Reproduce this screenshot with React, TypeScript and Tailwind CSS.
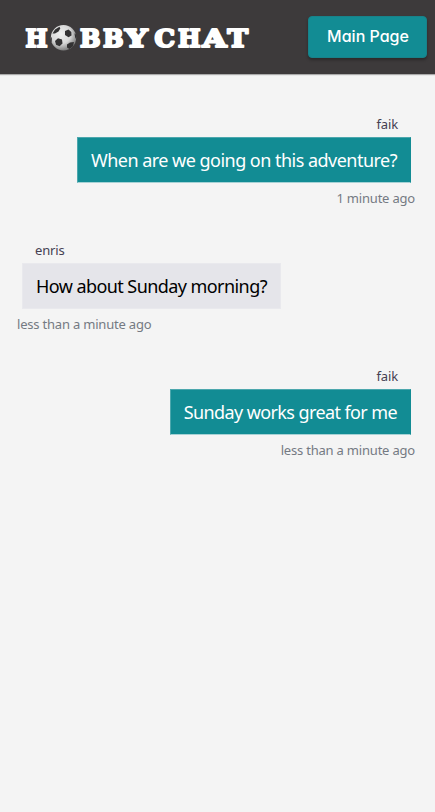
const letters = [
  { c: 'H', x: 25.5, w: 22 },
  { c: 'B', x: 80, w: 20.5 },
  { c: 'B', x: 103, w: 20.5 },
  { c: 'Y', x: 125, w: 22.5 },
  { c: 'C', x: 154.5, w: 20.5 },
  { c: 'H', x: 178, w: 22.5 },
  { c: 'A', x: 202.5, w: 24 },
  { c: 'T', x: 227.5, w: 20.5 },
];

function Logo() {
  return (
    <svg width="260" height="73" viewBox="0 0 260 73" role="img" aria-label="Hobby Chat" className="block shrink-0">
      <defs>
        <radialGradient id="ball" cx="0.4" cy="0.35" r="0.7">
          <stop offset="0" stopColor="#f0f0f0" />
          <stop offset="0.55" stopColor="#d8d8d8" />
          <stop offset="1" stopColor="#707070" />
        </radialGradient>
        <clipPath id="ballClip">
          <circle cx="63.5" cy="36.8" r="12.7" />
        </clipPath>
      </defs>
      <g className="font-['DejaVu_Serif'] font-bold" fontSize="25" fill="#fff" stroke="#fff" strokeWidth="2.2" strokeLinejoin="round">
        {letters.map((l) => (
          <text key={l.x} x={l.x} y="46.4" textLength={l.w} lengthAdjust="spacingAndGlyphs">
            {l.c}
          </text>
        ))}
      </g>
      <circle cx="63.5" cy="36.8" r="12.7" fill="url(#ball)" />
      <g clipPath="url(#ballClip)" fill="#333233">
        <path d="M52.500 32.500 55 28.500 59.500 25.800 60.300 27.500 58.500 30.500 55 32.500Z" />
        <path d="M65 30 68.500 28.500 71.300 31 71.500 34.500 68.500 36.300 65 34Z" />
        <path d="M55 40 58 37.300 62 38.500 62.500 42.500 59.500 45.300 56 43.800Z" />
        <path d="M67 43.500 70 41.500 74 41 73 45.500 69.500 48 67 46.500Z" />
        <path d="M50.500 35 51.800 37 51.800 41 50 41ZM74.500 32.500 77 33 77 39 75.300 37Z" />
      </g>
    </svg>
  );
}

type Message = { author: string; text: string; time: string; own: boolean; size: string; spacing: string };

const messages: Message[] = [
  { author: 'faik', text: 'When are we going on this adventure?', time: '1 minute ago', own: true, size: 'w-[334px]', spacing: 'tracking-[-0.52px]' },
  { author: 'enris', text: 'How about Sunday morning?', time: 'less than a minute ago', own: false, size: 'w-[259px]', spacing: 'tracking-[-0.57px]' },
  { author: 'faik', text: 'Sunday works great for me', time: 'less than a minute ago', own: true, size: 'w-[241px]', spacing: 'tracking-[-0.6px]' },
];

function ChatMessage({ author, text, time, own, size, spacing }: Message) {
  return (
    <div className={`flex h-[126px] flex-col whitespace-nowrap ${own ? 'items-end' : 'items-start'}`}>
      <div className={`h-5 text-[13px] leading-5 tracking-[-0.15px] text-[#454052] ${own ? 'mr-[37px]' : 'ml-[35px]'}`}>{author}</div>
      <div
        className={`mt-[3px] flex h-[46px] items-center border px-[13px] pt-px text-[18px] ${size} ${
          own ? 'mr-6 justify-end border-[#4ca7ad] border-r-[#128c94] border-b-[#a7d2d5] bg-[#128c94] text-white' : 'ml-[22px] border-[#e9e9ed] bg-[#e5e5ea] text-black'
        }`}
      >
        <span className={spacing}>{text}</span>
      </div>
      <div className={`mt-[5px] h-5 text-[13px] leading-5 tracking-[-0.2px] text-[#747a83] ${own ? 'mr-5' : 'ml-[17px]'}`}>{time}</div>
    </div>
  );
}

export default function App() {
  return (
    <div className="min-h-screen bg-[#f4f4f4] font-['Noto_Sans','Open_Sans',sans-serif]">
      <header className="flex h-[74px] items-center justify-between bg-[#3d3a3b] pr-2 shadow-[0_1px_1px_rgba(0,0,0,0.3)]">
        <Logo />
        <button className="h-[42px] w-[119px] rounded-[4px] border border-[#18828a] bg-[#128c94] pb-0.5 pl-px font-['Inter',sans-serif] text-[16px] font-medium text-white shadow-[0_2px_3px_rgba(0,0,0,0.3)] [font-feature-settings:'cv11']">
          Main Page
        </button>
      </header>
      <main className="pt-10">
        {messages.map((m) => (
          <ChatMessage key={m.text} {...m} />
        ))}
      </main>
    </div>
  );
}
